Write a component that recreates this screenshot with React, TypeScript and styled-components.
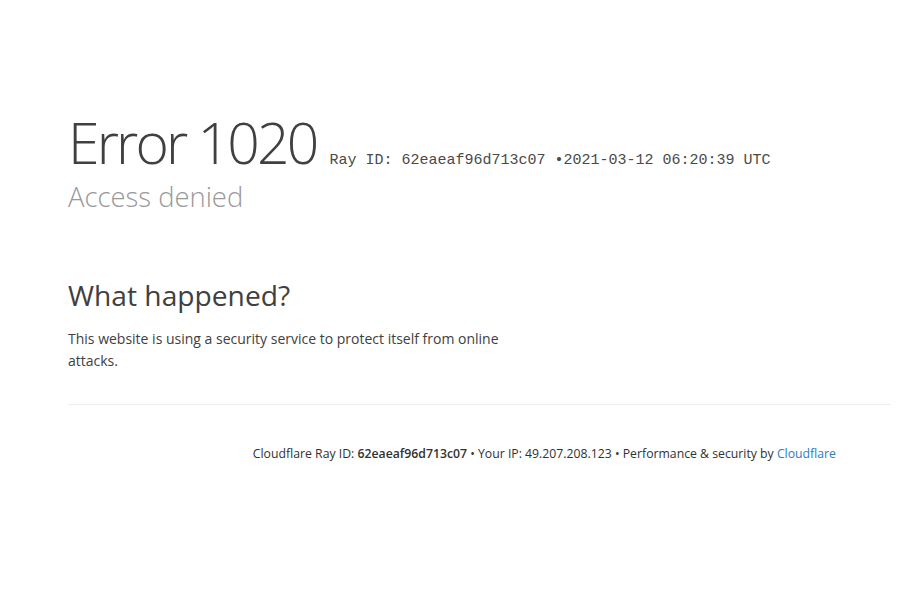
import React from "react";
import styled, { createGlobalStyle } from "styled-components";

const Global = createGlobalStyle`
  html, body { margin: 0; padding: 0; background: #fff; }
  body { font-family: "Open Sans", "Noto Sans", sans-serif; color: #404040; }
`;

const Page = styled.div`
  width: 900px;
  height: 600px;
  box-sizing: border-box;
  padding: 104px 10px 0 68px;
`;

const Header = styled.header`
  display: flex;
  flex-direction: column;
`;

const TitleRow = styled.div`
  display: flex;
  align-items: baseline;
  gap: 13px;
`;

const Title = styled.h1`
  margin: 0;
  font-size: 57px;
  font-weight: 300;
  line-height: 76px;
  color: #404040;
  letter-spacing: -2.8px;
`;

const RayMeta = styled.span`
  font-family: "Liberation Mono", "Courier New", monospace;
  font-size: 15px;
  color: #4a4a4a;
`;

const Subtitle = styled.h2`
  margin: 0;
  font-size: 27.4px;
  font-weight: 300;
  line-height: 34px;
  color: #999;
`;

const Section = styled.section`
  margin-top: 63px;
  width: 450px;
`;

const SectionTitle = styled.h2`
  margin: 0 0 15px;
  font-size: 28.2px;
  font-weight: 400;
  line-height: 36px;
  color: #404040;
`;

const Body = styled.p`
  margin: 0;
  font-size: 14px;
  line-height: 22px;
  color: #404040;
`;

const Footer = styled.footer`
  margin-top: 32px;
  border-top: 1px solid #ececec;
  padding-top: 40px;
  display: flex;
  justify-content: flex-end;
  padding-right: 54px;
  font-size: 12.25px;
  color: #313131;
`;

const Strong = styled.span`
  font-weight: 600;
`;

const Link = styled.a`
  color: #2f7bbf;
  text-decoration: none;
`;

export default function App() {
  return (
    <>
      <Global />
      <Page>
        <Header>
          <TitleRow>
            <Title>Error 1020</Title>
            <RayMeta>Ray ID: 62eaeaf96d713c07 •2021-03-12 06:20:39 UTC</RayMeta>
          </TitleRow>
          <Subtitle>Access denied</Subtitle>
        </Header>
        <Section>
          <SectionTitle>What happened?</SectionTitle>
          <Body>This website is using a security service to protect itself from online attacks.</Body>
        </Section>
        <Footer>
          <span>
            Cloudflare Ray ID: <Strong>62eaeaf96d713c07</Strong> • Your IP: 49.207.208.123 • Performance &amp; security by{" "}
            <Link href="#">Cloudflare</Link>
          </span>
        </Footer>
      </Page>
    </>
  );
}
